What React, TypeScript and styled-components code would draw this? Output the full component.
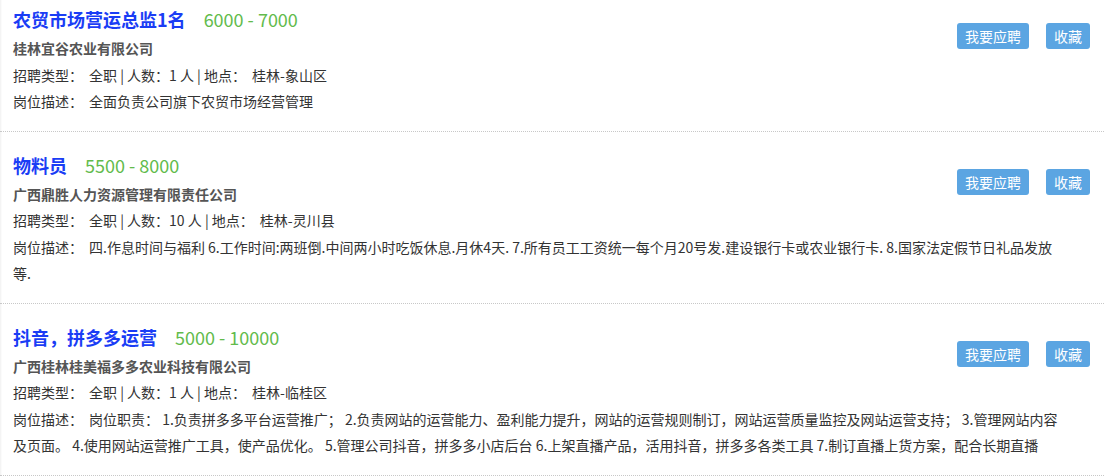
import styled, { createGlobalStyle } from "styled-components";

const GlobalStyle = createGlobalStyle`
	html, body {
		margin: 0;
		padding: 0;
		background: #fff;
	}
	body {
		font-family: "Microsoft YaHei", "Noto Sans CJK SC", "Noto Sans", sans-serif;
		overflow: hidden;
	}
`;

const List = styled.div`
	display: flex;
	flex-direction: column;
	margin-top: -14px;
`;

const Card = styled.div`
	padding: 18px 14px 16px 13px;
	border-bottom: 1px dotted #c8c8c8;
	box-shadow: inset 2px 0 2px -1px #f0f0f0;
`;

const Actions = styled.div`
	float: right;
	display: flex;
	gap: 17px;
	margin-top: 19px;
`;

const ActionButton = styled.button`
	height: 26px;
	padding: 0 8px;
	border: none;
	border-radius: 3px;
	background-color: #5ba5e2;
	color: #fff;
	font-family: inherit;
	font-size: 14px;
	line-height: 26px;
	cursor: pointer;
`;

const TitleRow = styled.div`
	display: flex;
	align-items: baseline;
	height: 31px;
	line-height: 31px;
`;

const Title = styled.span`
	font-size: 18px;
	font-weight: bold;
	color: #1a3df5;
`;

const Salary = styled.span`
	margin-left: 18px;
	font-size: 18px;
	color: #62bb4c;
`;

const Line = styled.div<{ $bold?: boolean }>`
	font-size: 14px;
	line-height: 26.5px;
	color: ${({ $bold }) => ($bold ? "#555" : "#333")};
	font-weight: ${({ $bold }) => ($bold ? "bold" : "normal")};
`;

const Desc = styled(Line)`
	margin-right: 30px;
	white-space: pre-line;
`;

const Label = styled.span`
	margin-right: 6px;
`;

type Job = {
	title: string;
	salary: string;
	company: string;
	count: string;
	place: string;
	desc: string;
};

const jobs: Job[] = [
	{
		title: "农贸市场营运总监1名",
		salary: "6000 - 7000",
		company: "桂林宜谷农业有限公司",
		count: "1",
		place: "桂林-象山区",
		desc: "全面负责公司旗下农贸市场经营管理",
	},
	{
		title: "物料员",
		salary: "5500 - 8000",
		company: "广西鼎胜人力资源管理有限责任公司",
		count: "10",
		place: "桂林-灵川县",
		desc: "四.作息时间与福利 6.工作时间:两班倒.中间两小时吃饭休息.月休4天. 7.所有员工工资统一每个月20号发.建设银行卡或农业银行卡. 8.国家法定假节日礼品发放\n等.",
	},
	{
		title: "抖音，拼多多运营",
		salary: "5000 - 10000",
		company: "广西桂林桂美福多多农业科技有限公司",
		count: "1",
		place: "桂林-临桂区",
		desc: "岗位职责： 1.负责拼多多平台运营推广； 2.负责网站的运营能力、盈利能力提升，网站的运营规则制订，网站运营质量监控及网站运营支持； 3.管理网站内容及页面。 4.使用网站运营推广工具，使产品优化。 5.管理公司抖音，拼多多小店后台 6.上架直播产品，活用抖音，拼多多各类工具 7.制订直播上货方案，配合长期直播",
	},
];

export default function App() {
	return (
		<>
			<GlobalStyle />
			<List>
				{jobs.map((job) => (
					<Card key={job.title}>
						<Actions>
							<ActionButton>我要应聘</ActionButton>
							<ActionButton>收藏</ActionButton>
						</Actions>
						<TitleRow>
							<Title>{job.title}</Title>
							<Salary>{job.salary}</Salary>
						</TitleRow>
						<Line $bold>{job.company}</Line>
						<Line>
							<Label>招聘类型：</Label>全职 | 人数：{job.count} 人 | 地点：
							<Label />
							{job.place}
						</Line>
						<Desc>
							<Label>岗位描述：</Label>
							{job.desc}
						</Desc>
					</Card>
				))}
			</List>
		</>
	);
}
